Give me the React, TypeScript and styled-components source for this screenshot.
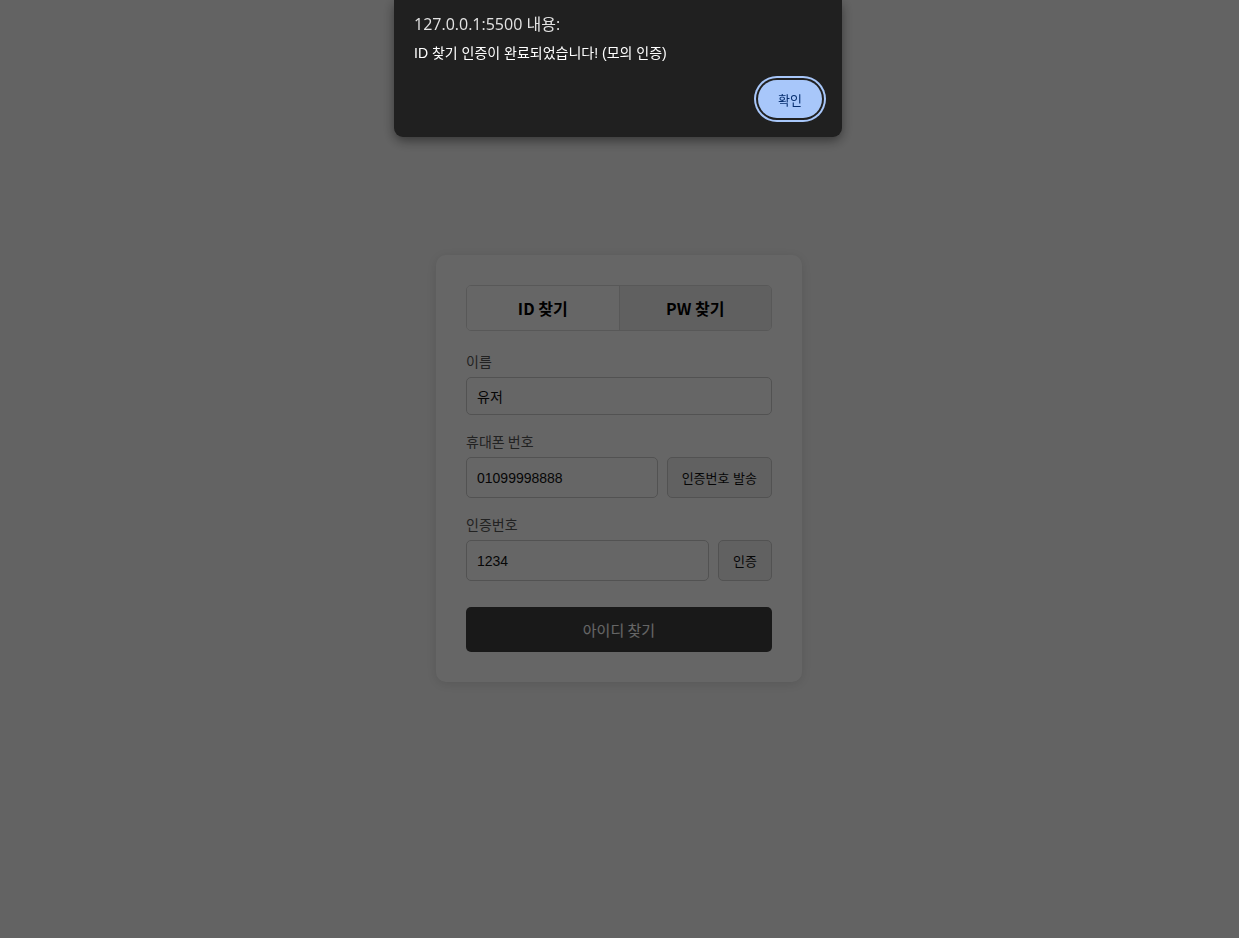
import * as React from 'react';
import styled, { createGlobalStyle } from 'styled-components';

const GlobalStyle = createGlobalStyle`
    * {
        box-sizing: border-box;
    }
    html, body {
        margin: 0;
        padding: 0;
    }
    body {
        background-color: #f8f8f8;
        font-family: 'Liberation Sans', 'Noto Sans CJK KR', sans-serif;
    }
`;

const Page = styled.div`
    min-height: 100vh;
    padding: 0 1px 1px 0;
    display: flex;
    align-items: center;
    justify-content: center;
`;

const Card = styled.div`
    width: 366px;
    padding: 30px;
    background-color: #ffffff;
    border-radius: 10px;
    box-shadow: 0 2px 12px rgba(0, 0, 0, 0.12);
`;

const Tabs = styled.div`
    display: flex;
    height: 46px;
    border: 1px solid #dddddd;
    border-radius: 5px;
    overflow: hidden;
    margin-bottom: 20px;
`;

const Tab = styled.button<{ $active?: boolean }>`
    flex: 1;
    border: none;
    background-color: ${({ $active }) => ($active ? '#ffffff' : '#f0f0f0')};
    border-left: ${({ $active }) => ($active ? 'none' : '1px solid #dddddd')};
    font-family: 'Noto Sans CJK KR', 'Noto Sans', sans-serif;
    font-size: 16px;
    font-weight: 700;
    color: #000000;
    padding: 0;
`;

const Field = styled.div`
    margin-bottom: 16px;
`;

const Label = styled.label`
    display: block;
    font-family: 'Noto Sans CJK KR', sans-serif;
    font-size: 14px;
    line-height: 20px;
    color: #555555;
    margin-bottom: 6px;
`;

const InputRow = styled.div`
    display: flex;
    gap: 9px;
    height: 41px;
`;

const Input = styled.input`
    width: 100%;
    height: 38px;
    padding: 0 10px;
    border: 1px solid #cccccc;
    border-radius: 5px;
    font-family: 'Liberation Sans', 'Noto Sans CJK KR', sans-serif;
    font-size: 14px;
    color: #111111;
    background-color: #ffffff;
    ${InputRow} & {
        flex: 1;
        height: 41px;
        min-width: 0;
    }
`;

const SideButton = styled.button`
    flex-shrink: 0;
    padding: 0 14px;
    border: 1px solid #cccccc;
    border-radius: 5px;
    background-color: #f2f2f2;
    font-family: 'Liberation Sans', 'Noto Sans CJK KR', sans-serif;
    font-size: 13px;
    color: #111111;
`;

const SubmitButton = styled.button`
    display: block;
    width: 100%;
    height: 45px;
    margin-top: 26px;
    border: none;
    border-radius: 5px;
    background-color: #404040;
    font-family: 'Noto Sans CJK KR', sans-serif;
    font-size: 15px;
    color: #ffffff;
`;

const Overlay = styled.div`
    position: fixed;
    inset: 0;
    background-color: rgba(0, 0, 0, 0.6);
`;

const Dialog = styled.div`
    position: fixed;
    top: 0;
    left: 394px;
    width: 448px;
    padding: 14px 20px 19px;
    background-color: #202020;
    border-radius: 0 0 9px 9px;
    box-shadow: 0 4px 12px rgba(0, 0, 0, 0.45);
`;

const DialogTitle = styled.div`
    font-family: 'Open Sans', 'Noto Sans CJK KR', sans-serif;
    font-size: 16px;
    line-height: 20px;
    color: #e3e3e3;
`;

const DialogMessage = styled.div`
    margin-top: 10px;
    font-family: 'Liberation Sans', 'Noto Sans CJK KR', sans-serif;
    font-size: 14px;
    line-height: 18px;
    color: #ffffff;
`;

const DialogActions = styled.div`
    display: flex;
    justify-content: flex-end;
    margin-top: 18px;
`;

const ConfirmButton = styled.button`
    width: 64px;
    height: 38px;
    border: none;
    border-radius: 19px;
    background-color: #a8c7fa;
    box-shadow: 0 0 0 2px #202020, 0 0 0 4px #a8c7fa;
    font-family: 'Noto Sans CJK KR', sans-serif;
    font-size: 13px;
    line-height: 1;
    color: #062e6f;
    padding: 0;
`;

export default function App() {
    return (
        <>
            <GlobalStyle />
            <Page>
                <Card>
                    <Tabs>
                        <Tab $active>ID 찾기</Tab>
                        <Tab>PW 찾기</Tab>
                    </Tabs>
                    <Field>
                        <Label>이름</Label>
                        <Input defaultValue="유저" />
                    </Field>
                    <Field>
                        <Label>휴대폰 번호</Label>
                        <InputRow>
                            <Input defaultValue="01099998888" />
                            <SideButton>인증번호 발송</SideButton>
                        </InputRow>
                    </Field>
                    <Field>
                        <Label>인증번호</Label>
                        <InputRow>
                            <Input defaultValue="1234" />
                            <SideButton>인증</SideButton>
                        </InputRow>
                    </Field>
                    <SubmitButton>아이디 찾기</SubmitButton>
                </Card>
            </Page>
            <Overlay />
            <Dialog>
                <DialogTitle>127.0.0.1:5500 내용:</DialogTitle>
                <DialogMessage>ID 찾기 인증이 완료되었습니다! (모의 인증)</DialogMessage>
                <DialogActions>
                    <ConfirmButton>확인</ConfirmButton>
                </DialogActions>
            </Dialog>
        </>
    );
}
